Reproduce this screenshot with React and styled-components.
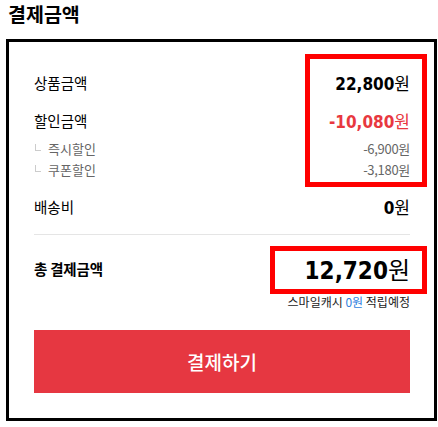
import React from "react";
import styled, {createGlobalStyle} from "styled-components";

const GlobalStyle = createGlobalStyle`
    html, body {
        margin: 0;
        padding: 0;
        background: #fff;
    }
    body {
        font-family: "Noto Sans CJK KR", "Noto Sans", sans-serif;
        color: #000;
    }
`;

const Page = styled.div`
    position: relative;
    width: 438px;
    height: 427px;
    padding: 2px 0 0 6px;
    box-sizing: border-box;
`;

const Title = styled.h2`
    margin: 0 0 14px;
    padding-left: 2px;
    height: 23px;
    font-size: 19.5px;
    line-height: 23px;
    font-weight: 700;
`;

const Box = styled.div`
    width: 431px;
    box-sizing: border-box;
    border: 3px solid #000;
    padding: 28px 24px 25px 25px;
    display: flex;
    flex-direction: column;
`;

const Row = styled.div`
    display: flex;
    align-items: center;
    justify-content: space-between;
    height: ${(props) => props.h || 24}px;
    margin-top: ${(props) => props.mt || 0}px;
`;

const Label = styled.span`
    font-size: 14.5px;
    font-weight: ${(props) => (props.bold ? 700 : 400)};
    letter-spacing: ${(props) => (props.bold ? "-0.2px" : "0")};
`;

const SubList = styled.div`
    margin-top: 6px;
    display: flex;
    flex-direction: column;
`;

const SubLabel = styled.span`
    position: relative;
    padding-left: 14px;
    font-size: 13px;
    color: #666;
    &::before {
        content: "";
        position: absolute;
        left: 1px;
        top: 5px;
        width: 5px;
        height: 6px;
        border-left: 1px solid #ccc;
        border-bottom: 1px solid #ccc;
    }
`;

const Amount = styled.span`
    display: flex;
    align-items: baseline;
    color: ${(props) => props.color || "#000"};
`;

const Num = styled.span`
    font-family: "DejaVu Sans Condensed", "DejaVu Sans", sans-serif;
    font-weight: 700;
    font-size: ${(props) => props.size}px;
`;

const Won = styled.span`
    font-size: ${(props) => props.size}px;
    font-weight: 400;
`;

const SubAmount = styled.span`
    font-size: 13px;
    color: #666;
    letter-spacing: -0.3px;
`;

const Divider = styled.div`
    height: 1px;
    background: #e5e5e5;
    margin-top: 16px;
`;

const Note = styled.div`
    margin-top: 9px;
    height: 16px;
    line-height: 16px;
    text-align: right;
    font-size: 12px;
    color: #222;
    em {
        font-style: normal;
        color: #2f7fe0;
    }
`;

const PayButton = styled.button`
    margin-top: 20px;
    height: 63px;
    border: none;
    background: #e63741;
    color: #fff;
    font-family: "Noto Sans CJK KR", sans-serif;
    font-size: 19px;
    font-weight: 500;
    cursor: pointer;
`;

const Highlight = styled.div`
    position: absolute;
    box-sizing: border-box;
    border: 5px solid #ff0000;
    left: ${(props) => props.x}px;
    top: ${(props) => props.y}px;
    width: ${(props) => props.w}px;
    height: ${(props) => props.h}px;
    pointer-events: none;
`;

function Price({value, size, color}){
    return(
        <Amount color={color}>
            <Num size={size}>{value}</Num>
            <Won size={size}>원</Won>
        </Amount>
    );
}

export default function App(){
    return(
        <Page>
            <GlobalStyle />
            <Title>결제금액</Title>
            <Box>
                <Row>
                    <Label>상품금액</Label>
                    <Price value="22,800" size={17} />
                </Row>
                <Row mt={14}>
                    <Label>할인금액</Label>
                    <Price value="-10,080" size={17} color="#e8383f" />
                </Row>
                <SubList>
                    <Row h={21}>
                        <SubLabel>즉시할인</SubLabel>
                        <SubAmount>-6,900원</SubAmount>
                    </Row>
                    <Row h={21}>
                        <SubLabel>쿠폰할인</SubLabel>
                        <SubAmount>-3,180원</SubAmount>
                    </Row>
                </SubList>
                <Row mt={14}>
                    <Label>배송비</Label>
                    <Price value="0" size={17} />
                </Row>
                <Divider />
                <Row h={34} mt={16}>
                    <Label bold>총 결제금액</Label>
                    <Price value="12,720" size={24} />
                </Row>
                <Note>스마일캐시 <em>0원</em> 적립예정</Note>
                <PayButton>결제하기</PayButton>
            </Box>
            <Highlight x={305} y={54} w={122} h={133} />
            <Highlight x={270} y={246} w={157} h={48} />
        </Page>
    );
}
